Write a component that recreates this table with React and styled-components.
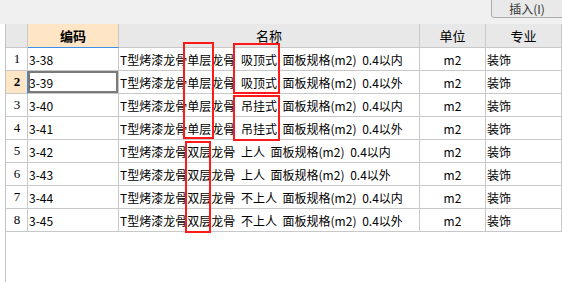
import React from 'react';
import styled, { createGlobalStyle } from 'styled-components';

const GlobalStyle = createGlobalStyle`
	html, body {
		margin: 0;
		padding: 0;
		background: #ffffff;
	}
	body {
		font-family: "Noto Sans CJK SC", "Noto Sans", sans-serif;
		font-size: 12px;
		color: #000;
	}
`;

const Page = styled.div`
	position: relative;
	width: 562px;
	height: 282px;
	overflow: hidden;
	display: flex;
	flex-direction: column;
`;

const Toolbar = styled.div`
	height: 24px;
	background: #f0f0f0;
	display: flex;
	justify-content: flex-end;
	align-items: flex-start;
	flex-shrink: 0;
`;

const ToolButton = styled.button`
	width: 72px;
	height: 19px;
	margin-top: -1px;
	margin-right: -1px;
	padding: 0;
	border: 1px solid #adadad;
	border-bottom-left-radius: 3px;
	background: #e9e9e9;
	font-family: "Noto Sans CJK SC", sans-serif;
	font-size: 12px;
	color: #333;
	line-height: 17px;
`;

const Body = styled.div`
	flex: 1;
	padding-left: 5px;
	display: flex;
`;

const Grid = styled.div`
	flex: 1;
	border-left: 1px solid #c4c4c4;
	display: grid;
	grid-template-columns: 22px 91px 301px 66px 1fr;
	grid-auto-rows: 23px;
	grid-template-rows: 24px;
	align-content: start;
`;

const Cell = styled.div`
	box-sizing: border-box;
	border-right: 1px solid #c8c8c8;
	border-bottom: 1px solid #c8c8c8;
	display: flex;
	align-items: center;
	justify-content: ${p => (p.$center ? 'center' : 'flex-start')};
	padding-left: ${p => (p.$center ? 0 : 1)}px;
	white-space: pre;
	overflow: hidden;
	word-spacing: 3px;
	background: ${p => (p.$active ? '#fde5c6' : '#fff')};
`;

const HeadCell = styled(Cell)`
	background: ${p => (p.$active ? '#fde5c6' : '#e8e8e8')};
	font-weight: ${p => (p.$active ? 700 : 400)};
	font-size: 13px;
	border-bottom: ${p => (p.$active ? '1px solid #3c8ee8' : '1px solid #c8c8c8')};
`;

const RowNum = styled(Cell)`
	justify-content: center;
	font-family: "Liberation Serif", serif;
	font-size: 13px;
	font-weight: ${p => (p.$active ? 700 : 400)};
	background: ${p => (p.$active ? '#fde5c6' : '#fff')};
	border-right: 1px solid ${p => (p.$active ? '#3c8ee8' : '#c8c8c8')};
`;

const CodeCell = styled(Cell)`
	${p => p.$focus && `
		box-shadow: inset 0 0 0 2px #7a7a7a;
	`}
`;

const Mark = styled.div`
	position: absolute;
	box-sizing: border-box;
	border: 2px solid #ff1a1a;
	pointer-events: none;
`;

const rows = [
	['3-38', 'T型烤漆龙骨单层龙骨 吸顶式 面板规格(m2) 0.4以内'],
	['3-39', 'T型烤漆龙骨单层龙骨 吸顶式 面板规格(m2) 0.4以外'],
	['3-40', 'T型烤漆龙骨单层龙骨 吊挂式 面板规格(m2) 0.4以内'],
	['3-41', 'T型烤漆龙骨单层龙骨 吊挂式 面板规格(m2) 0.4以外'],
	['3-42', 'T型烤漆龙骨双层龙骨 上人 面板规格(m2) 0.4以内'],
	['3-43', 'T型烤漆龙骨双层龙骨 上人 面板规格(m2) 0.4以外'],
	['3-44', 'T型烤漆龙骨双层龙骨 不上人 面板规格(m2) 0.4以内'],
	['3-45', 'T型烤漆龙骨双层龙骨 不上人 面板规格(m2) 0.4以外'],
];

// annotation boxes drawn over the grid
const marks = [
	{ left: 183, top: 42, width: 31, height: 97 },
	{ left: 233, top: 43, width: 47, height: 51 },
	{ left: 233, top: 95, width: 47, height: 46 },
	{ left: 185, top: 141, width: 26, height: 92 },
];

const selectedRow = 1;

export default function App() {
	return (
		<Page>
			<GlobalStyle />
			<Toolbar>
				<ToolButton>插入(I)</ToolButton>
			</Toolbar>
			<Body>
				<Grid>
					<HeadCell />
					<HeadCell $center $active>编码</HeadCell>
					<HeadCell $center>名称</HeadCell>
					<HeadCell $center>单位</HeadCell>
					<HeadCell $center>专业</HeadCell>
					{rows.map((row, i) => (
						<React.Fragment key={row[0]}>
							<RowNum $active={i === selectedRow}>{i + 1}</RowNum>
							<CodeCell $focus={i === selectedRow}>{row[0]}</CodeCell>
							<Cell>{row[1]}</Cell>
							<Cell $center>m2</Cell>
							<Cell>装饰</Cell>
						</React.Fragment>
					))}
				</Grid>
			</Body>
			{marks.map((m, i) => (
				<Mark key={i} style={m} />
			))}
		</Page>
	);
}
